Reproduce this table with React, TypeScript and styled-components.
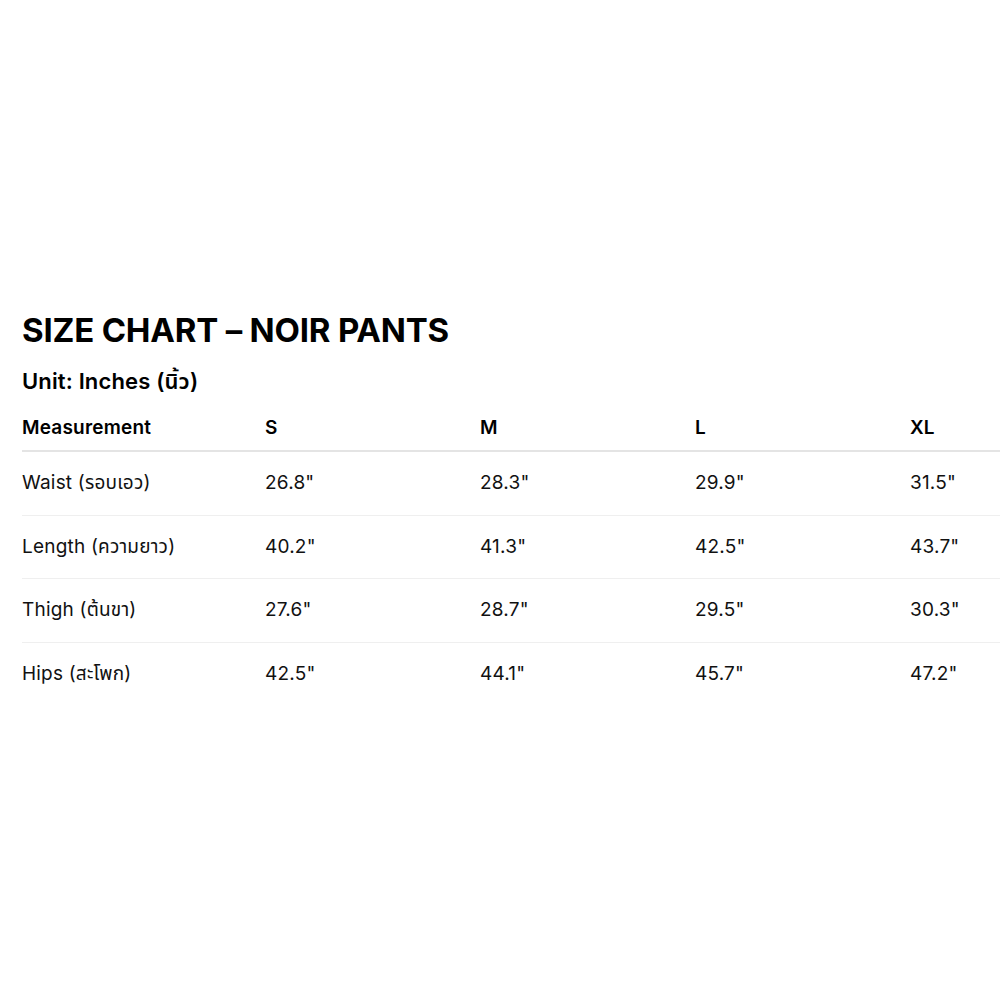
import React from 'react';
import styled, { createGlobalStyle } from 'styled-components';

const GlobalStyle = createGlobalStyle`
  html, body {
    margin: 0;
    padding: 0;
    background: #ffffff;
    overflow: hidden;
  }
  body {
    font-family: Inter, "Noto Sans", "Noto Sans Thai", "DejaVu Sans", sans-serif;
    color: #000000;
  }
`;

const Page = styled.div`
  display: flex;
  flex-direction: column;
  min-height: 1000px;
  padding: 310px 0 0 22px;
  box-sizing: border-box;
`;

const Title = styled.h1`
  margin: 0 0 17px;
  font-size: 33px;
  line-height: 40px;
  font-weight: 700;
  letter-spacing: -0.2px;
`;

const Subtitle = styled.h2`
  margin: 0 0 11px;
  font-size: 22px;
  line-height: 28px;
  font-weight: 600;
  letter-spacing: 0.15px;
`;

const Table = styled.table`
  border-collapse: collapse;
  table-layout: fixed;
  width: 1103px;
`;

const HeadCell = styled.th<{ $width: number }>`
  width: ${({ $width }) => $width}px;
  text-align: left;
  font-size: 19px;
  line-height: 24px;
  font-weight: 600;
  letter-spacing: 0.2px;
  padding: 10px 0;
  border-bottom: 2px solid #e4e4e4;
`;

const Row = styled.tr<{ $last?: boolean }>`
  border-bottom: ${({ $last }) => ($last ? 'none' : '1px solid #efefef')};
`;

const Cell = styled.td`
  font-size: 19px;
  line-height: 22.5px;
  font-weight: 400;
  letter-spacing: 0.2px;
  padding: 20px 0;
  color: #111111;
`;

const sizes = ['S', 'M', 'L', 'XL'];

const rows = [
  { label: 'Waist (รอบเอว)', values: ['26.8"', '28.3"', '29.9"', '31.5"'] },
  { label: 'Length (ความยาว)', values: ['40.2"', '41.3"', '42.5"', '43.7"'] },
  { label: 'Thigh (ต้นขา)', values: ['27.6"', '28.7"', '29.5"', '30.3"'] },
  { label: 'Hips (สะโพก)', values: ['42.5"', '44.1"', '45.7"', '47.2"'] },
];

export default function App() {
  return (
    <>
      <GlobalStyle />
      <Page>
        <Title>SIZE CHART – NOIR PANTS</Title>
        <Subtitle>Unit: Inches (นิ้ว)</Subtitle>
        <Table>
          <thead>
            <tr>
              <HeadCell $width={243}>Measurement</HeadCell>
              {sizes.map(s => (
                <HeadCell key={s} $width={215}>{s}</HeadCell>
              ))}
            </tr>
          </thead>
          <tbody>
            {rows.map((r, i) => (
              <Row key={r.label} $last={i === rows.length - 1}>
                <Cell>{r.label}</Cell>
                {r.values.map((v, j) => (
                  <Cell key={j}>{v}</Cell>
                ))}
              </Row>
            ))}
          </tbody>
        </Table>
      </Page>
    </>
  );
}
